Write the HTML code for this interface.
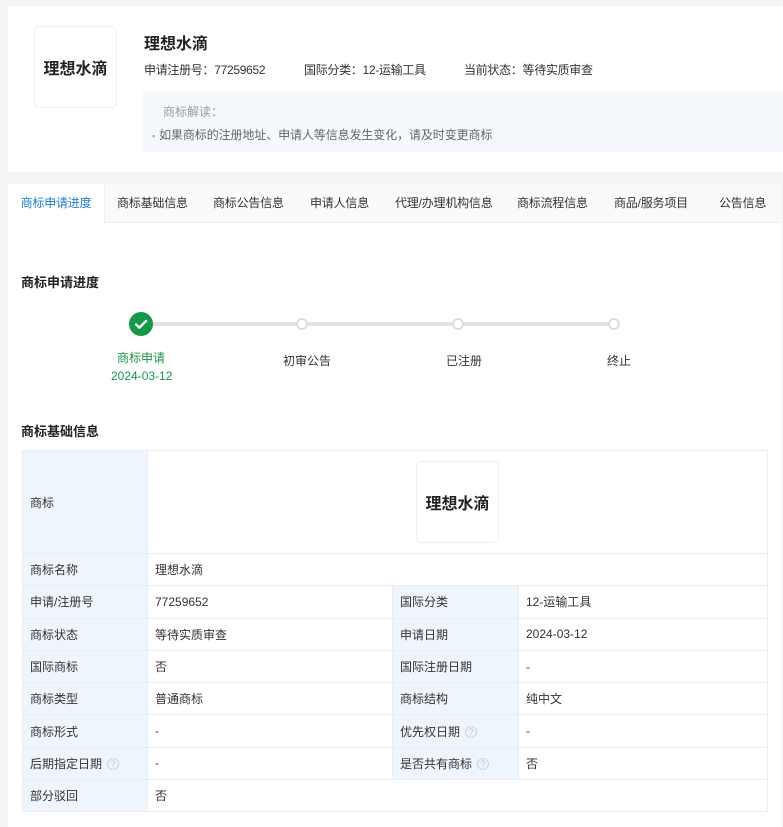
<!DOCTYPE html>
<html><head><meta charset="utf-8"><style>
*{margin:0;padding:0;box-sizing:border-box}
body{width:783px;height:827px;background:#f4f4f4;font-family:"Liberation Sans","Noto Sans CJK SC",sans-serif;font-size:12px;color:#333;position:relative;overflow:hidden}
.a{position:absolute;white-space:nowrap}
.card{position:absolute;background:#fff}
.logo{position:absolute;border:1px solid #eee;border-radius:5px;background:#fff;display:flex;align-items:center;justify-content:center;font-weight:bold;color:#222;font-size:16px}
.tabs{position:absolute;left:8px;top:184px;width:773px;height:39px;background:#fafafa;border-bottom:1px solid #eee}
.tab{position:absolute;top:0;height:38px;line-height:38px;font-size:12px;letter-spacing:-0.2px;color:#333;white-space:nowrap}
.dot{position:absolute;width:12px;height:12px;border:2px solid #ddd;border-radius:50%;background:#fff}
table{position:absolute;left:22px;top:450px;width:746px;border-collapse:collapse}
td{border:1px solid #e6edf3;height:32.3px;padding:0 7px;font-size:12px;color:#333;white-space:nowrap}
td.l{background:#eef5fc;width:125px}
td.l2{background:#eef5fc;width:126px}
td.v{width:245px}
.q{display:inline-block;width:12px;height:12px;border:1px solid #c8d3dd;border-radius:50%;color:#b8c4cf;font-size:9px;line-height:10px;text-align:center;margin-left:5px;vertical-align:1px}
</style></head><body>
<div class="card" style="left:8px;top:6px;width:775px;height:166px"></div>
<div class="logo" style="left:34px;top:26px;width:83px;height:82px">理想水滴</div>
<div class="a" style="left:144px;top:30px;font-size:16px;font-weight:bold;color:#222">理想水滴</div>
<div class="a" style="left:144px;top:61px;color:#333;letter-spacing:-0.3px">申请注册号：77259652</div>
<div class="a" style="left:304px;top:61px;letter-spacing:-0.3px">国际分类：12-运输工具</div>
<div class="a" style="left:464px;top:61px;letter-spacing:-0.3px">当前状态：等待实质审查</div>
<div class="a" style="left:143px;top:91px;width:640px;height:61px;background:#f5f9fd"></div>
<div class="a" style="left:163px;top:103px;color:#999;font-size:12px">商标解读：</div>
<div class="a" style="left:152px;top:126px;color:#666;font-size:12px;letter-spacing:-0.1px"><span style="color:#aaa;font-size:9px;margin-right:4px">▪</span>如果商标的注册地址、申请人等信息发生变化，请及时变更商标</div>

<div class="card" style="left:8px;top:184px;width:773px;height:643px"></div>
<div class="tabs">
<div class="tab" style="left:0;width:97px;background:#fff;border-right:1px solid #eee;height:39px;text-align:center;color:#1a7ee8">商标申请进度</div>
<div class="tab" style="left:109px">商标基础信息</div>
<div class="tab" style="left:205px">商标公告信息</div>
<div class="tab" style="left:302px">申请人信息</div>
<div class="tab" style="left:387px">代理/办理机构信息</div>
<div class="tab" style="left:509px">商标流程信息</div>
<div class="tab" style="left:606px">商品/服务项目</div>
<div class="tab" style="left:711px">公告信息</div>
</div>

<div class="a" style="left:21px;top:272px;font-size:13px;font-weight:bold;color:#222">商标申请进度</div>
<div class="a" style="left:141px;top:322px;width:473px;height:4px;background:#e2e2e2"></div>
<div class="a" style="left:129px;top:312px;width:24px;height:24px;border-radius:50%;background:#129a48"><svg width="24" height="24" viewBox="0 0 24 24"><path d="M7 12.5l3.3 3.2L17 9" stroke="#fff" stroke-width="2.4" fill="none" stroke-linecap="round" stroke-linejoin="round"/></svg></div>
<div class="dot" style="left:296px;top:318px"></div>
<div class="dot" style="left:452px;top:318px"></div>
<div class="dot" style="left:608px;top:318px"></div>
<div class="a" style="left:117px;top:349px;color:#129a48">商标申请</div>
<div class="a" style="left:111px;top:369px;color:#129a48">2024-03-12</div>
<div class="a" style="left:283px;top:352px">初审公告</div>
<div class="a" style="left:446px;top:352px">已注册</div>
<div class="a" style="left:607px;top:352px">终止</div>

<div class="a" style="left:21px;top:421px;font-size:13px;font-weight:bold;color:#222">商标基础信息</div>
<table>
<tr><td class="l" style="height:103px">商标</td><td colspan="3" style="position:relative"><div class="logo" style="left:268px;top:10px;width:83px;height:82px">理想水滴</div></td></tr>
<tr><td class="l">商标名称</td><td colspan="3">理想水滴</td></tr>
<tr><td class="l">申请/注册号</td><td class="v">77259652</td><td class="l2">国际分类</td><td>12-运输工具</td></tr>
<tr><td class="l">商标状态</td><td class="v">等待实质审查</td><td class="l2">申请日期</td><td>2024-03-12</td></tr>
<tr><td class="l">国际商标</td><td class="v">否</td><td class="l2">国际注册日期</td><td>-</td></tr>
<tr><td class="l">商标类型</td><td class="v">普通商标</td><td class="l2">商标结构</td><td>纯中文</td></tr>
<tr><td class="l">商标形式</td><td class="v">-</td><td class="l2">优先权日期<span class="q">?</span></td><td>-</td></tr>
<tr><td class="l">后期指定日期<span class="q">?</span></td><td class="v">-</td><td class="l2">是否共有商标<span class="q">?</span></td><td>否</td></tr>
<tr><td class="l">部分驳回</td><td colspan="3">否</td></tr>
</table>
</body></html>
